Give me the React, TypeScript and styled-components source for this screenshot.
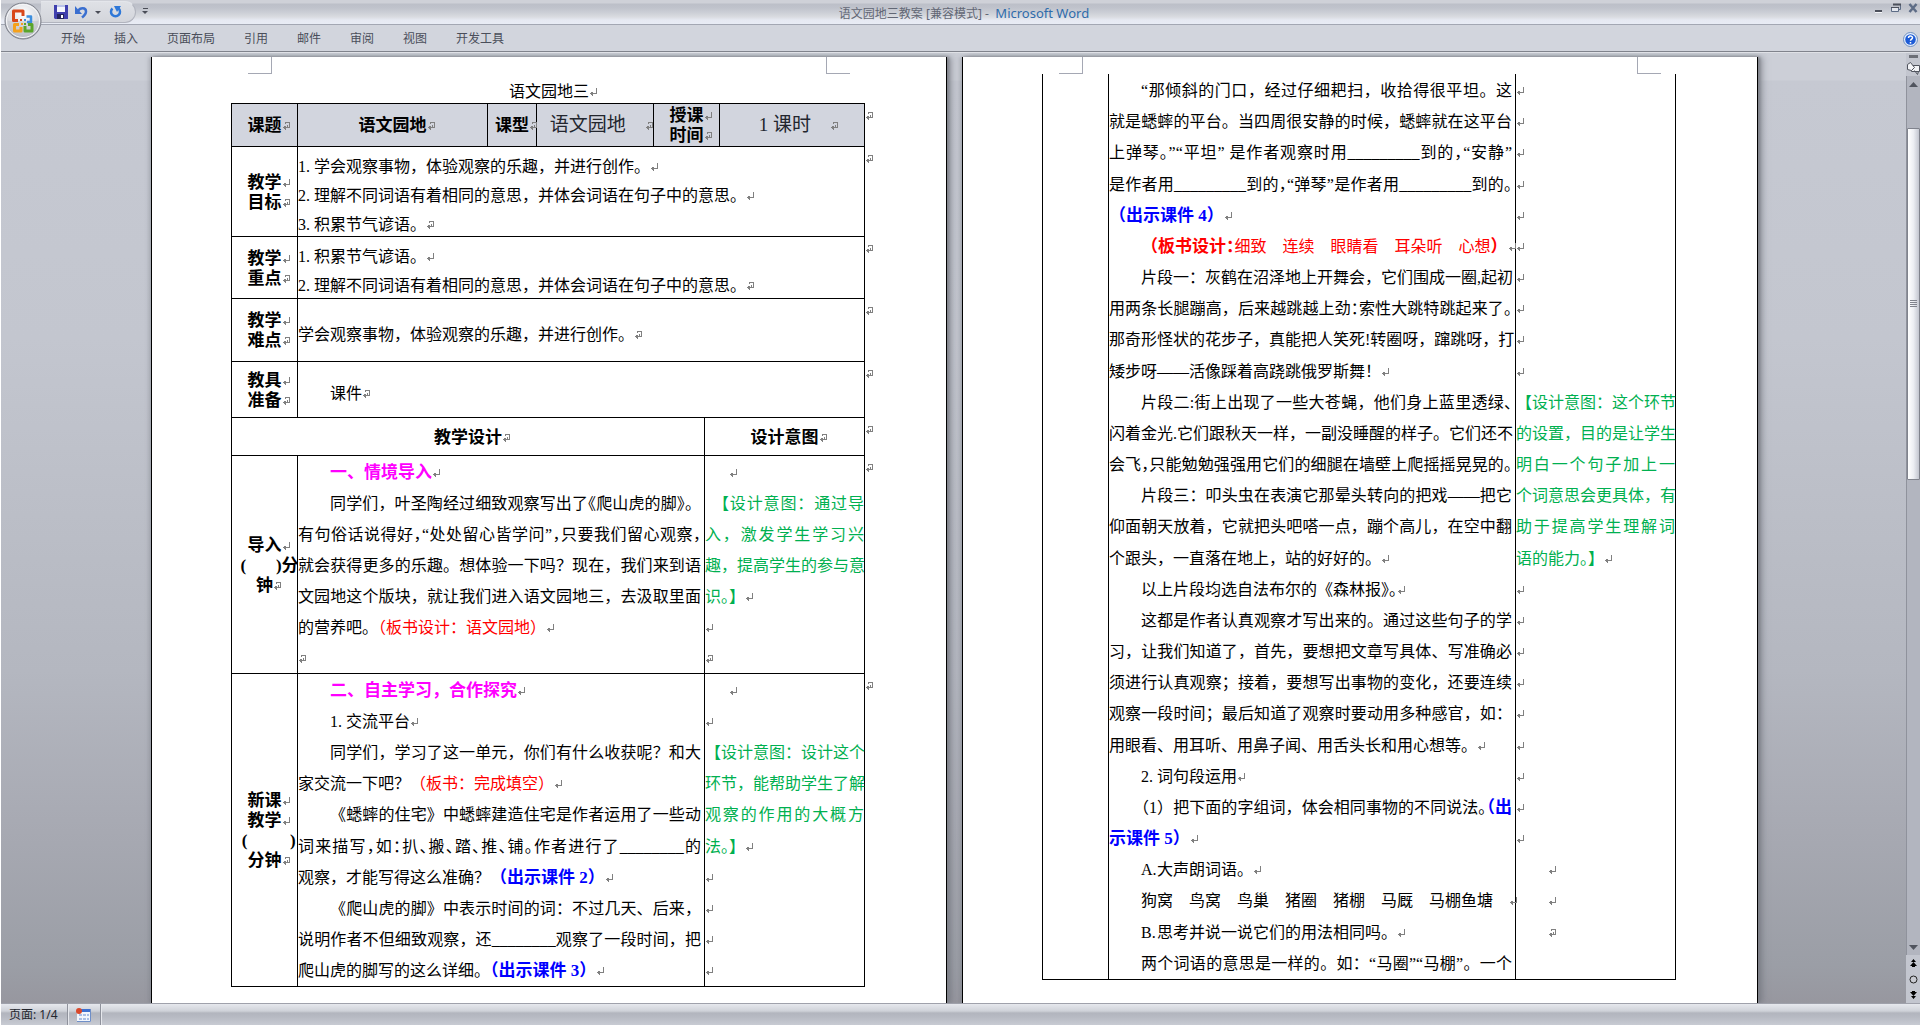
import React from "react";
import styled, { createGlobalStyle, css } from "styled-components";

const Global = createGlobalStyle`
  * { box-sizing: border-box; }
  html, body { margin: 0; padding: 0; }
  body { background: #fff; overflow: hidden; }
  button { font: inherit; color: inherit; background: none; border: 0; padding: 0; margin: 0; display: inline-flex; align-items: center; justify-content: center; }
`;

/* ---------- window chrome ---------- */

const Window = styled.div`
  display: flex;
  flex-direction: column;
  height: 100vh;
  padding-left: 1px;
  font: 12px/16px "Noto Sans", "Noto Sans CJK SC", sans-serif;
  color: #4a4e5a;
`;

const TopBars = styled.header`
  position: relative;
  flex: none;
`;

const TitleBar = styled.div`
  display: flex;
  align-items: center;
  height: 25px;
  padding: 0 2px 0 40px;
  border-bottom: 1px solid #a3a7b3;
  background: linear-gradient(#cfd1d8 0, #cfd1d8 3px, #bcbfc8 4px, #c0c3cc 8px, #cdd0d7 13px, #dadce1 17px, #e6e9f2 20px, #e8ecf5 24px);
`;

const QuickAccess = styled.div`
  display: flex;
  align-items: center;
  gap: 7px;
  width: 95px;
  height: 22px;
  padding-left: 13px;
  border: 1px solid #b1b4be;
  border-top-color: #e4e6eb;
  border-left: 0;
  border-radius: 0 11px 11px 0;
  background: linear-gradient(#dfe1e6, #d3d5db);
`;

const QuickMore = styled.button`
  width: 9px;
  margin-left: 5px;
`;

const Caption = styled.h1`
  flex: 1;
  margin: 0;
  padding: 2px 96px 0 0;
  text-align: center;
  white-space: pre;
  font-size: 12px;
  font-weight: 400;
  line-height: 16px;
  color: #626775;
`;

const AppName = styled.span`
  font-size: 13px;
  color: #2f6cab;
`;

const WindowButtons = styled.div`
  display: flex;
  align-self: flex-start;
  gap: 7px;
  padding-top: 3px;
`;

const TabBar = styled.nav`
  display: flex;
  align-items: center;
  gap: 29px;
  height: 27px;
  padding: 2px 2px 0 60px;
  border-bottom: 1px solid #80838c;
  background: #d2d5dd;
`;

const Tab = styled.button`
  height: 20px;
  color: #4a4e5a;
`;

const HelpButton = styled.button`
  && { margin-left: auto; }
`;

const OfficeButton = styled.button`
  position: absolute;
  left: 3px;
  top: 2px;
  z-index: 2;
`;

const Workspace = styled.main`
  flex: 1;
  min-height: 0;
  display: flex;
  border-top: 1px solid #dfe1e6;
`;

const Canvas = styled.section`
  flex: 1;
  min-width: 0;
  display: flex;
  justify-content: center;
  align-items: stretch;
  gap: 15px;
  padding: 4px 0 0 2px;
  overflow: hidden;
  background: linear-gradient(#cccfd7 0, #cccfd7 27px, #c6c9d2 28px, #c3c6cf 30%, #b4b7c0 65%, #a7a9b2 82%, #9b9ea6 96%, #97979f 100%);
`;

/* ---------- scroll bar ---------- */

const ScrollColumn = styled.aside`
  flex: none;
  display: flex;
  flex-direction: column;
  align-items: stretch;
  width: 14px;
  padding-top: 2px;
  background: #c3c6cf;
`;

const SplitHandle = styled.div`
  height: 3px;
  margin: 0 2px 2px 3px;
  background: #6c6f77;
`;

const ColumnButton = styled.button`
  height: 16px;
`;

const Track = styled.div`
  flex: 1;
  display: flex;
  flex-direction: column;
  border-left: 1px solid #8f929c;
  background: #b2b5bf;
`;

const Thumb = styled.div`
  flex: none;
  height: 40%;
  margin-top: 36px;
  border: 1px solid #80838d;
  border-radius: 1px;
  background: linear-gradient(90deg, #ffffff, #eceef3 50%, #c3c6d0);
  display: flex;
  align-items: center;
  justify-content: center;
`;

const Spacer = styled.div`
  flex: 1;
`;

/* ---------- status bar ---------- */

const StatusBar = styled.footer`
  flex: none;
  display: flex;
  align-items: stretch;
  height: 22px;
  border-top: 1px solid #9fa1ab;
  background: linear-gradient(#e6e8ed 0, #cfd2d9 7px, #b2b5be 9px, #b7bac3 13px, #c8cbd3 21px);
`;

const StatusItem = styled.button`
  && {
    padding: 0 9px 0 8px;
    border-right: 1px solid #8f929c;
    box-shadow: 1px 0 #e6e8ed;
    color: #23262e;
  }
`;

/* ---------- document ---------- */

const Sheet = styled.article<{ $top: number }>`
  position: relative;
  flex: none;
  width: 796px;
  padding: ${(p) => p.$top}px 0 0 79px;
  border: solid #000;
  border-width: 0 1px;
  background: #fff;
  box-shadow: 2px 0 3px #7e8088, 5px 0 6px rgba(110, 112, 122, 0.5), -2px 0 4px rgba(120, 122, 132, 0.4);
  color: #000;
  font: 16px/31px "Liberation Serif", "Noto Sans CJK SC", serif;
`;

const Crop = styled.span<{ $side: "left" | "right" }>`
  position: absolute;
  top: 0;
  width: 24px;
  height: 17px;
  border-bottom: 1px solid #a5a8b4;
  ${(p) =>
    p.$side === "left"
      ? css`left: 96px; border-right: 1px solid #a5a8b4;`
      : css`right: 96px; border-left: 1px solid #a5a8b4;`}
`;

const DocTitle = styled.h2`
  margin: 0 79px 0 0;
  height: 21px;
  font-size: 16px;
  line-height: 20px;
  font-weight: 400;
  text-align: center;
`;

const Grid = styled.table<{ $open?: boolean }>`
  width: 634px;
  table-layout: fixed;
  border-collapse: separate;
  border-spacing: 0;
  border-left: 1px solid #000;
  border-top: ${(p) => (p.$open ? "0" : "1px solid #000")};
`;

const Row = styled.tr<{ $h: number; $shaded?: boolean }>`
  height: ${(p) => p.$h}px;
  background: ${(p) => (p.$shaded ? "#d2d5de" : "transparent")};
`;

const cell = css`
  position: relative;
  padding: 0;
  border: solid #000;
  border-width: 0 1px 1px 0;
`;

const Label = styled.th`
  ${cell}
  padding-top: 2px;
  font-size: 17px;
  line-height: 20px;
  font-weight: 700;
  text-align: center;
  vertical-align: middle;
  white-space: pre;
`;

const Cell = styled.td<{ $middle?: boolean }>`
  ${cell}
  padding-top: ${(p) => (p.$middle ? 8 : 0)}px;
  vertical-align: ${(p) => (p.$middle ? "middle" : "top")};
`;

const Value = styled.td`
  ${cell}
  font-size: 19px;
  line-height: 24px;
  text-align: center;
  vertical-align: middle;
  white-space: pre;
  color: #23262e;
`;

const Goals = styled.div`
  margin-bottom: -6px;
  padding-top: 5px;
  line-height: 29px;
  white-space: nowrap;
`;

const Lines = styled.div<{ $h: number; $inset?: boolean }>`
  display: flex;
  flex-direction: column;
  justify-content: space-between;
  height: ${(p) => p.$h}px;
  padding: 1px ${(p) => (p.$inset ? 3 : 0)}px 0 0;
`;

const Line = styled.div<{ $in?: number; $full?: boolean; $tight?: boolean }>`
  height: 31px;
  padding-left: ${(p) => p.$in || 0}px;
  white-space: nowrap;
  text-align-last: ${(p) => (p.$full ? "justify" : "left")};
  font-feature-settings: ${(p) => (p.$tight ? '"halt"' : "normal")};
`;

const Half = styled.span`
  font-feature-settings: "halt";
`;

const Num = styled.span`
  display: inline-block;
  width: 16px;
  text-align-last: left;
`;

const Heading = styled.b`
  font-size: 17px;
  color: #ff00ff;
`;
const Cue = styled.b`
  font-size: 17px;
  color: #0000ff;
`;
const Board = styled.span`
  color: #ff0000;
  b { font-size: 17px; }
`;
const Intent = styled.span`
  color: #00b050;
`;

const RowEnd = styled.span`
  position: absolute;
  left: 100%;
  top: 0;
  padding-left: 1px;
  line-height: 24px;
  font-size: 16px;
`;

const MarkSvg = styled.svg`
  width: 8px;
  height: 8px;
  margin: 0 -8px 0 0;
  vertical-align: 1px;
`;

function Mark({ end }: { end?: boolean }) {
  return (
    <MarkSvg viewBox="0 0 8 8" fill="none" stroke="#808080" shapeRendering="crispEdges" aria-hidden="true">
      <path d={end ? "M3.500 2V.5h4v5H5.500M1 5.500h4.500V3" : "M7.500 0v5.500H1"} />
      <path d="M2.500 4v3M1.500 5v1M3.500 3.500v4" />
    </MarkSvg>
  );
}

const End = () => (
  <RowEnd>
    <Mark end />
  </RowEnd>
);

/* ---------- icons ---------- */

const OfficeLogo = () => (
  <svg width="38" height="38" viewBox="0 0 38 38" aria-hidden="true">
    <defs>
      <radialGradient id="orb" cx=".5" cy=".3" r=".75">
        <stop offset="0" stopColor="#fff" />
        <stop offset=".55" stopColor="#dcdde2" />
        <stop offset="1" stopColor="#a9acb6" />
      </radialGradient>
    </defs>
    <circle cx="19" cy="19" r="18" fill="url(#orb)" stroke="#7c7f89" />
    <circle cx="19" cy="19" r="16.5" fill="none" stroke="#f6f7f9" />
    <path d="M4 19a15 15 0 0 0 30 0z" fill="#c0c2ca" opacity=".5" />
    <g fill="none" strokeWidth="3" strokeLinejoin="round">
      <path d="M14 18.500H9.500V9H19v5" stroke="#d8471a" />
      <path d="M22.500 14.500H27V20h-4" stroke="#3d8ede" strokeWidth="2.500" />
      <path d="M15 22.500h-4.500V29H17v-4" stroke="#f5a11c" />
      <path d="M21 24v5h7v-6.500h-4" stroke="#5aa52c" />
    </g>
    <path d="M16 17h2v2h-2z" fill="#d8471a" />
    <path d="M20 17h2v2h-2z" fill="#3d8ede" />
    <path d="M17 21h2v2h-2z" fill="#f5a11c" />
    <path d="M20 21h2v2h-2z" fill="#5aa52c" />
  </svg>
);

const SaveIcon = () => (
  <svg width="14" height="14" viewBox="0 0 14 14" aria-hidden="true">
    <path d="M0 0h14v14H1l-1-1z" fill="#3f3fae" />
    <path d="M3 0h8v7H3z" fill="#f4f6fd" />
    <path d="M3 0h8v2H3z" fill="#b9c2ea" />
    <path d="M3 9h7v5H3z" fill="#23235e" />
    <path d="M7 10h2v3H7z" fill="#fff" />
  </svg>
);

const UndoIcon = () => (
  <svg width="13" height="14" viewBox="0 0 13 14" fill="none" aria-hidden="true">
    <path d="M3 6C5 2.500 11 2 11 6.500c0 2.500-1.500 4-4 6" stroke="#3a6fd0" strokeWidth="2.500" />
    <path d="M0 1v8h7z" fill="#3a6fd0" />
  </svg>
);

const RedoIcon = () => (
  <svg width="13" height="14" viewBox="0 0 13 14" fill="none" aria-hidden="true">
    <path d="M3.500 3.500a4.500 4.500 0 1 0 6 0" stroke="#2f78d8" strokeWidth="2.500" />
    <path d="M5 1h7L8 7z" fill="#2f78d8" />
  </svg>
);

const Down = ({ bar }: { bar?: boolean }) => (
  <svg width="7" height="8" viewBox="0 0 7 8" fill="#4a4d57" aria-hidden="true">
    {bar && <path d="M1 0h5v1H1z" />}
    <path d="M0 3h6L3 6z" />
  </svg>
);

const HelpIcon = () => (
  <svg width="15" height="15" viewBox="0 0 15 15" aria-hidden="true">
    <circle cx="7.500" cy="7.500" r="7" fill="#e8f0fb" stroke="#6f8fc0" />
    <circle cx="7.500" cy="7.500" r="5.300" fill="#1d5bd6" />
    <path d="M5.500 6c0-2.500 4-2.500 4-.2 0 1.300-2 1.300-2 3M7.500 10v1.500" stroke="#fff" strokeWidth="1.500" fill="none" />
  </svg>
);

const MinimizeIcon = () => (
  <svg width="10" height="11" viewBox="0 0 10 11" aria-hidden="true">
    <path d="M1 7h7v2H1z" fill="#4c505b" />
    <path d="M1 9h7v1H1z" fill="#f4f5f8" />
  </svg>
);

const RestoreIcon = () => (
  <svg width="10" height="11" viewBox="0 0 10 11" fill="none" stroke="#5d6c86" aria-hidden="true">
    <path d="M2.500 1.500h7v5h-2" />
    <path d="M2 1.500h8" stroke="#4c505b" strokeWidth="2" />
    <path d="M.5 4.500h7v4h-7z" fill="#e4e7ee" />
    <path d="M0 4.500h8" stroke="#4c505b" />
  </svg>
);

const CloseIcon = () => (
  <svg width="10" height="11" viewBox="0 0 10 11" fill="none" aria-hidden="true">
    <path d="M1.500 1l7 8M8.500 1l-7 8" stroke="#5d6c86" strokeWidth="2.500" />
  </svg>
);

const ViewIcon = () => (
  <svg width="13" height="13" viewBox="0 0 13 13" fill="#f3f4f7" stroke="#50545e" aria-hidden="true">
    <path d="M4.500 3.500h8v6h-8z" />
    <path d="M.5 2.500l3-2 4 5-3 3-4-1z" />
    <path d="M7.500 8.500l3 4 1-3" fill="none" />
  </svg>
);

const Triangle = ({ up }: { up?: boolean }) => (
  <svg width="9" height="5" viewBox="0 0 9 5" fill="#50545e" aria-hidden="true">
    <path d={up ? "M0 5h9L4.500 0z" : "M0 0h9L4.500 5z"} />
  </svg>
);

const DoubleArrow = ({ up }: { up?: boolean }) => (
  <svg width="7" height="8" viewBox="0 0 7 8" fill="#000" aria-hidden="true">
    <path d={up ? "M3.500 0L6 3H1zM3.500 3L7 7H0zM2 7h3v1H2z" : "M2 0h3v1H2zM0 1h7L3.500 5zM1 5h5L3.500 8z"} />
  </svg>
);

const MacroIcon = () => (
  <svg width="15" height="14" viewBox="0 0 15 14" aria-hidden="true">
    <path d="M2 1h13v13H1V5z" fill="#f2f6fd" />
    <path d="M3 1h12v3H3z" fill="#3d6fd0" />
    <path d="M14.500 1v12.500H1" stroke="#6f8fc8" fill="none" />
    <path d="M3 6h3v2H3zM7 6h3v2H7zM11 6h2v2h-2zM3 10h3v2H3zM7 10h3v2H7zM11 10h2v2h-2z" fill="#a9bfe6" />
    <circle cx="3" cy="3" r="3" fill="#d9482b" />
  </svg>
);

/* ---------- pages ---------- */

function PageOne() {
  return (
    <Sheet $top={25}>
      <Crop $side="left" />
      <Crop $side="right" />
      <DocTitle>语文园地三<Mark /></DocTitle>
      <Grid>
        <colgroup>
          {[66, 190, 49, 117, 51, 15, 145].map((w, i) => (
            <col key={i} width={w} />
          ))}
        </colgroup>
        <tbody>
          <Row $h={43} $shaded>
            <Label>课题<Mark end /></Label>
            <Label>语文园地<Mark end /></Label>
            <Label>课型<Mark end /></Label>
            <Value>{" 语文园地　"}<Mark end /></Value>
            <Label colSpan={2}>授课<Mark />{"\n"}时间<Mark end /></Label>
            <Value>{" 1 课时　"}<Mark end /><End /></Value>
          </Row>
          <Row $h={90}>
            <Label scope="row">教学<Mark />{"\n"}目标<Mark end /></Label>
            <Cell colSpan={6}>
              <Goals>
                <div><Num>1.</Num>学会观察事物，体验观察的乐趣，并进行创作。<Mark /></div>
                <div><Num>2.</Num>理解不同词语有着相同的意思，并体会词语在句子中的意思。<Mark /></div>
                <div><Num>3.</Num>积累节气谚语。<Mark end /></div>
              </Goals>
              <End />
            </Cell>
          </Row>
          <Row $h={62}>
            <Label scope="row">教学<Mark />{"\n"}重点<Mark end /></Label>
            <Cell colSpan={6}>
              <Goals>
                <div><Num>1.</Num>积累节气谚语。<Mark /></div>
                <div><Num>2.</Num>理解不同词语有着相同的意思，并体会词语在句子中的意思。<Mark end /></div>
              </Goals>
              <End />
            </Cell>
          </Row>
          <Row $h={63}>
            <Label scope="row">教学<Mark />{"\n"}难点<Mark end /></Label>
            <Cell colSpan={6} $middle>
              <Line>学会观察事物，体验观察的乐趣，并进行创作。<Mark end /></Line>
              <End />
            </Cell>
          </Row>
          <Row $h={56}>
            <Label scope="row">教具<Mark />{"\n"}准备<Mark end /></Label>
            <Cell colSpan={6} $middle>
              <Line $in={32}>课件<Mark end /></Line>
              <End />
            </Cell>
          </Row>
          <Row $h={38}>
            <Label colSpan={5}>教学设计<Mark end /></Label>
            <Label colSpan={2}>设计意图<Mark end /><End /></Label>
          </Row>
          <Row $h={218}>
            <Label scope="row">导入<Mark />{"\n  (       )分\n"}钟<Mark end /></Label>
            <Cell colSpan={4}>
              <Lines $h={217} $inset>
                <Line $in={32}><Heading>一、情境导入</Heading><Mark /></Line>
                <Line $in={32} $full>同学们，叶圣陶经过细致观察写出了<Half>《</Half>爬山虎的脚》。</Line>
                <Line $full $tight>有句俗话说得好，“处处留心皆学问”，只要我们留心观察，</Line>
                <Line $full>就会获得更多的乐趣。想体验一下吗？现在，我们来到语</Line>
                <Line $full>文园地这个版块，就让我们进入语文园地三，去汲取里面</Line>
                <Line>的营养吧。<Board>（板书设计：语文园地）</Board><Mark /></Line>
                <Line><Mark end /></Line>
              </Lines>
            </Cell>
            <Cell colSpan={2}>
              <Lines $h={217}>
                <Line $in={24}><Mark /></Line>
                <Line $in={8} $full><Intent>【设计意图：通过导</Intent></Line>
                <Line $full><Intent>入，激发学生学习兴</Intent></Line>
                <Line $full><Intent>趣，提高学生的参与意</Intent></Line>
                <Line><Intent>识。】</Intent><Mark /></Line>
                <Line><Mark /></Line>
                <Line><Mark end /></Line>
              </Lines>
              <End />
            </Cell>
          </Row>
          <Row $h={313}>
            <Label scope="row">新课<Mark />{"\n"}教学<Mark />{"\n  (          )\n"}分钟<Mark end /></Label>
            <Cell colSpan={4}>
              <Lines $h={312} $inset>
                <Line $in={32}><Heading>二、自主学习，合作探究</Heading><Mark /></Line>
                <Line $in={32}><Num>1.</Num>交流平台<Mark /></Line>
                <Line $in={32} $full>同学们，学习了这一单元，你们有什么收获呢？和大</Line>
                <Line>家交流一下吧？<Board>（板书：完成填空）</Board><Mark /></Line>
                <Line $in={32} $full>《蟋蟀的住宅》中蟋蟀建造住宅是作者运用了一些动</Line>
                <Line $full $tight>词来描写，如：扒、搬、踏、推、铺。作者进行了________的</Line>
                <Line>观察，才能写得这么准确？<Cue>（出示课件 2）</Cue><Mark /></Line>
                <Line $in={32} $full>《爬山虎的脚》中表示时间的词：不过几天、后来，</Line>
                <Line $full>说明作者不但细致观察，还________观察了一段时间，把</Line>
                <Line>爬山虎的脚写的这么详细。<Cue><Half>（</Half>出示课件 3）</Cue><Mark /></Line>
              </Lines>
            </Cell>
            <Cell colSpan={2}>
              <Lines $h={312}>
                <Line $in={24}><Mark /></Line>
                <Line><Mark /></Line>
                <Line $full><Intent>【设计意图：设计这个</Intent></Line>
                <Line $full><Intent>环节，能帮助学生了解</Intent></Line>
                <Line $full><Intent>观察的作用的大概方</Intent></Line>
                <Line><Intent>法。】</Intent><Mark /></Line>
                <Line><Mark /></Line>
                <Line><Mark /></Line>
                <Line><Mark /></Line>
                <Line><Mark /></Line>
              </Lines>
              <End />
            </Cell>
          </Row>
        </tbody>
      </Grid>
    </Sheet>
  );
}

const blanks = (n: number) => Array.from({ length: n }, (_, i) => <Line key={i}><Mark /></Line>);

function PageTwo() {
  return (
    <Sheet $top={17}>
      <Crop $side="left" />
      <Crop $side="right" />
      <Grid $open>
        <colgroup>
          <col width={66} />
          <col width={407} />
          <col width={160} />
        </colgroup>
        <tbody>
          <Row $h={906}>
            <Cell />
            <Cell>
              <Lines $h={905} $inset>
                <Line $in={32} $full>“那倾斜的门口，经过仔细耙扫，收拾得很平坦。这</Line>
                <Line $full>就是蟋蟀的平台。当四周很安静的时候，蟋蟀就在这平台</Line>
                <Line $full $tight>上弹琴。”“平坦” 是作者观察时用_________到的，“安静”</Line>
                <Line $full $tight>是作者用_________到的，“弹琴”是作者用_________到的。</Line>
                <Line><Cue>（出示课件 4）</Cue><Mark /></Line>
                <Line $in={32}><Board><b>（板书设计<Half>：</Half></b>细致　连续　眼睛看　耳朵听　心想<b>）</b></Board><Mark /></Line>
                <Line $in={32} $full>片段一：灰鹤在沼泽地上开舞会，它们围成一圈,起初</Line>
                <Line $full>用两条长腿蹦高，后来越跳越上劲<Half>：</Half>索性大跳特跳起来了<Half>。</Half></Line>
                <Line $full>那奇形怪状的花步子，真能把人笑死!转圈呀，蹿跳呀，打</Line>
                <Line>矮步呀——活像踩着高跷跳俄罗斯舞！<Mark /></Line>
                <Line $in={32} $full>片段二:街上出现了一些大苍蝇，他们身上蓝里透绿<Half>、</Half></Line>
                <Line $full>闪着金光.它们跟秋天一样，一副没睡醒的样子。它们还不</Line>
                <Line $full $tight>会飞，只能勉勉强强用它们的细腿在墙壁上爬摇摇晃晃的。</Line>
                <Line $in={32} $full>片段三：叩头虫在表演它那晕头转向的把戏——把它</Line>
                <Line $full>仰面朝天放着，它就把头吧嗒一点，蹦个高儿，在空中翻</Line>
                <Line>个跟头，一直落在地上，站的好好的。<Mark /></Line>
                <Line $in={32}>以上片段均选自法布尔的《森林报》<Half>。</Half><Mark /></Line>
                <Line $in={32} $full>这都是作者认真观察才写出来的。通过这些句子的学</Line>
                <Line $full>习，让我们知道了，首先，要想把文章写具体、写准确必</Line>
                <Line $full>须进行认真观察；接着，要想写出事物的变化，还要连续</Line>
                <Line $full>观察一段时间；最后知道了观察时要动用多种感官，如：</Line>
                <Line>用眼看、用耳听、用鼻子闻、用舌头长和用心想等。<Mark /></Line>
                <Line $in={32}><Num>2.</Num>词句段运用<Mark /></Line>
                <Line $in={32} $full><Half>（</Half>1）把下面的字组词，体会相同事物的不同说法<Half>。</Half><Cue><Half>（</Half>出</Cue></Line>
                <Line><Cue>示课件 5）</Cue><Mark /></Line>
                <Line $in={32}><Num>A.</Num>大声朗词语。<Mark /></Line>
                <Line $in={32}>狗窝　鸟窝　鸟巢　猪圈　猪棚　马厩　马棚鱼塘　<Mark /></Line>
                <Line $in={32}><Num>B.</Num>思考并说一说它们的用法相同吗。<Mark /></Line>
                <Line $in={32} $full>两个词语的意思是一样的。如：“马圈”“马棚”。一个</Line>
              </Lines>
            </Cell>
            <Cell>
              <Lines $h={905}>
                {blanks(10)}
                <Line $full><Intent>【设计意图：这个环节</Intent></Line>
                <Line $full><Intent>的设置，目的是让学生</Intent></Line>
                <Line $full><Intent>明白一个句子加上一</Intent></Line>
                <Line $full><Intent>个词意思会更具体，有</Intent></Line>
                <Line $full><Intent>助于提高学生理解词</Intent></Line>
                <Line><Intent>语的能力。】</Intent><Mark /></Line>
                {blanks(9)}
                <Line $in={32}><Mark /></Line>
                <Line $in={32}><Mark /></Line>
                <Line $in={32}><Mark end /></Line>
                <Line />
              </Lines>
            </Cell>
          </Row>
        </tbody>
      </Grid>
    </Sheet>
  );
}

const TABS = ["开始", "插入", "页面布局", "引用", "邮件", "审阅", "视图", "开发工具"];

export default function App() {
  return (
    <Window lang="zh-CN">
      <Global />
      <TopBars>
        <OfficeButton aria-label="Office 按钮"><OfficeLogo /></OfficeButton>
        <TitleBar>
          <QuickAccess>
            <button aria-label="保存"><SaveIcon /></button>
            <button aria-label="撤消"><UndoIcon /></button>
            <button aria-label="撤消列表"><Down /></button>
            <button aria-label="重复"><RedoIcon /></button>
          </QuickAccess>
          <QuickMore aria-label="自定义快速访问工具栏"><Down bar /></QuickMore>
          <Caption>语文园地三教案 [兼容模式] - <AppName> Microsoft Word</AppName></Caption>
          <WindowButtons>
            <button aria-label="最小化"><MinimizeIcon /></button>
            <button aria-label="还原"><RestoreIcon /></button>
            <button aria-label="关闭"><CloseIcon /></button>
          </WindowButtons>
        </TitleBar>
        <TabBar>
          {TABS.map((t) => (
            <Tab key={t}>{t}</Tab>
          ))}
          <HelpButton aria-label="帮助"><HelpIcon /></HelpButton>
        </TabBar>
      </TopBars>
      <Workspace>
        <Canvas>
          <PageOne />
          <PageTwo />
        </Canvas>
        <ScrollColumn>
          <SplitHandle />
          <ColumnButton aria-label="标尺"><ViewIcon /></ColumnButton>
          <Track>
            <ColumnButton aria-label="向上滚动"><Triangle up /></ColumnButton>
            <Thumb>
              <svg width="7" height="8" viewBox="0 0 7 8" stroke="#80838d" aria-hidden="true">
                <path d="M0 .5h7M0 2.500h7M0 4.500h7M0 6.500h7" />
              </svg>
            </Thumb>
            <Spacer />
            <ColumnButton aria-label="向下滚动"><Triangle /></ColumnButton>
          </Track>
          <ColumnButton aria-label="前一页"><DoubleArrow up /></ColumnButton>
          <ColumnButton aria-label="选择浏览对象">
            <svg width="9" height="9" viewBox="0 0 9 9" aria-hidden="true">
              <circle cx="4.500" cy="4.500" r="3.500" fill="#c9cbd2" stroke="#222" />
            </svg>
          </ColumnButton>
          <ColumnButton aria-label="下一页"><DoubleArrow /></ColumnButton>
        </ScrollColumn>
      </Workspace>
      <StatusBar>
        <StatusItem>页面: 1/4</StatusItem>
        <StatusItem aria-label="录制宏"><MacroIcon /></StatusItem>
      </StatusBar>
    </Window>
  );
}
